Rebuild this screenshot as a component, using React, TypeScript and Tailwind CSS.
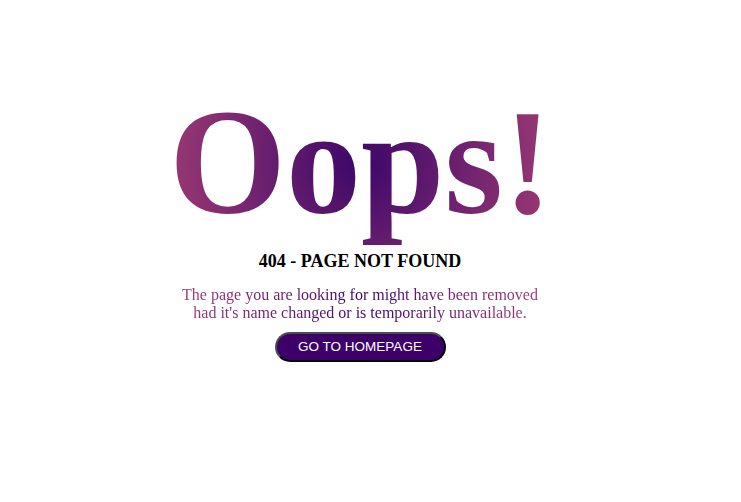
export default function App() {
  return (
    <div className="min-h-[502px] w-full bg-white pt-[76px] pr-[21px] font-['Liberation_Serif',serif]">
      <div className="flex flex-col items-center text-center">
        <h1 className="inline-block bg-[radial-gradient(circle,#3c0769,#a23d74)] bg-clip-text pl-[2px] text-[150px] font-bold leading-[1.15] text-transparent">
          Oops!
        </h1>
        <h2 className="mt-[2px] text-[18px] font-bold leading-[1.15] text-black">
          404 - PAGE NOT FOUND
        </h2>
        <p className="mt-[15px] inline-block bg-[radial-gradient(circle,#3c0769,#a23d74)] bg-clip-text text-[16px] leading-[18px] text-transparent">
          The page you are looking for might have been removed
          <br />
          had it's name changed or is temporarily unavailable.
        </p>
        <button className="mt-[10px] h-[30px] w-[171px] rounded-full border-2 border-[#4d4d4d] border-b-black border-r-black bg-[#3c0068] font-['Liberation_Sans',sans-serif] text-[13.5px] text-white">
          GO TO HOMEPAGE
        </button>
      </div>
    </div>
  );
}
